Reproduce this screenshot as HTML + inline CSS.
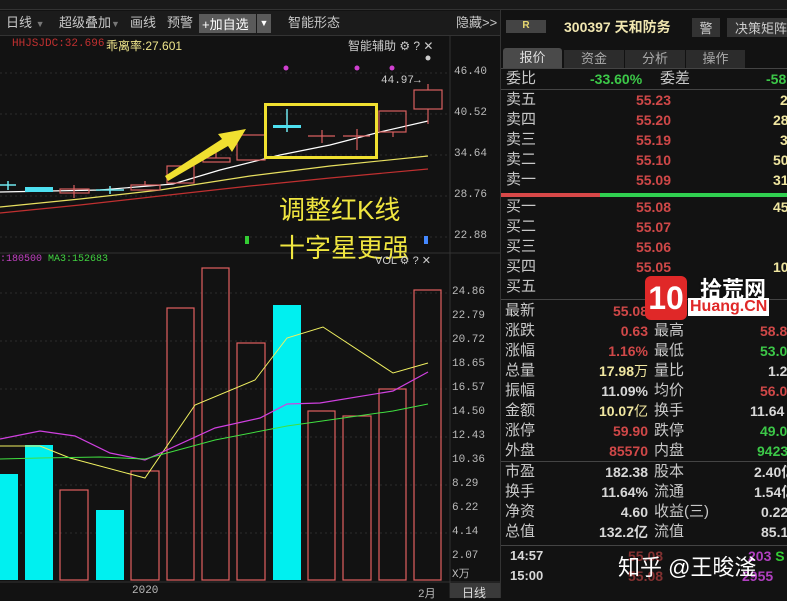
<!DOCTYPE html>
<html><head><meta charset="utf-8"><style>
*{margin:0;padding:0;box-sizing:border-box}
body{width:787px;height:598px;background:#121212;font-family:"Liberation Sans","Noto Sans CJK SC",sans-serif;position:relative;overflow:hidden;color:#ccc}
.a{position:absolute;white-space:nowrap}
.lb{font-size:15px;color:#c8c8c8;line-height:18px}
.r{color:#d04848;font-weight:bold;line-height:18px}
.g{color:#3cc848;font-weight:bold;line-height:18px}
.y{color:#f0e6a0;font-weight:bold;line-height:18px}
.w{color:#d8d8d8;line-height:18px}
.m{font-family:"Liberation Mono",monospace;font-size:11px;color:#bbb}
</style></head><body>
<div class="a" style="left:0;top:0;width:787px;height:10px;background:#1a1a1a;border-bottom:1px solid #333"></div>
<div class="a" style="left:0;top:11px;width:500px;height:25px;background:#1b1b1b;border-bottom:1px solid #333"></div>
<div class="a lb" style="left:6px;top:14px;font-size:13px">日线 <span style="color:#777;font-size:9px">▼</span></div>
<div class="a lb" style="left:59px;top:14px;font-size:13px">超级叠加<span style="color:#777;font-size:9px">▼</span></div>
<div class="a lb" style="left:130px;top:14px;font-size:13px">画线</div>
<div class="a lb" style="left:167px;top:14px;font-size:13px">预警</div>
<div class="a" style="left:199px;top:14px;width:57px;height:19px;background:#5a5a5a;color:#fff;font-size:13px;padding-left:3px">+加自选</div>
<div class="a" style="left:257px;top:14px;width:14px;height:19px;background:#5a5a5a;color:#fff;font-size:9px;text-align:center;line-height:19px">▼</div>
<div class="a lb" style="left:288px;top:14px;font-size:13px">智能形态</div>
<div class="a lb" style="left:456px;top:14px;font-size:13px">隐藏&gt;&gt;</div>
<svg class="a" style="left:0;top:36px" width="500" height="562" viewBox="0 36 500 562">
<line x1="450" y1="36" x2="450" y2="598" stroke="#333"/>
<line x1="0" y1="253" x2="500" y2="253" stroke="#333"/>
<line x1="0" y1="582" x2="500" y2="582" stroke="#333"/>
<g stroke="#2c2c2c" stroke-dasharray="2,3">
<line x1="0" y1="73" x2="450" y2="73"/><line x1="0" y1="114" x2="450" y2="114"/><line x1="0" y1="155" x2="450" y2="155"/><line x1="0" y1="196" x2="450" y2="196"/><line x1="0" y1="237" x2="450" y2="237"/>
</g>
<polyline fill="none" stroke="#c03030" stroke-width="1.2" points="0,213 80,205 160,196 250,186 330,178 428,169"/>
<polyline fill="none" stroke="#e8e060" stroke-width="1.2" points="0,207 80,199 160,190 250,176 330,166 428,156"/>
<polyline fill="none" stroke="#fff" stroke-width="1.2" points="0,192 100,190 173,184 220,170 280,155 330,145 380,132 428,121"/>
<g stroke="#70e8f0" stroke-width="1.5">
<line x1="0" y1="185" x2="16" y2="185"/><line x1="8" y1="181" x2="8" y2="190"/>
<line x1="110" y1="186" x2="110" y2="194"/><line x1="96" y1="190" x2="124" y2="190"/>
<line x1="287" y1="109" x2="287" y2="132"/></g>
<rect x="25" y="187" width="28" height="5" fill="#4ee0f0"/>
<rect x="273" y="125" width="28" height="3" fill="#4ee0f0"/>
<g stroke="#d86060" stroke-width="1.2" fill="none">
<rect x="60" y="189" width="29" height="4"/><line x1="74" y1="185" x2="74" y2="198"/>
<rect x="131" y="185" width="29" height="5"/><line x1="145" y1="181" x2="145" y2="185"/>
<rect x="167" y="166" width="27" height="17"/>
<rect x="203" y="158" width="27" height="4"/><line x1="216" y1="150" x2="216" y2="158"/>
<rect x="237" y="135" width="28" height="25"/>
<line x1="308" y1="136" x2="335" y2="136"/><line x1="322" y1="130" x2="322" y2="143"/>
<line x1="343" y1="136" x2="370" y2="136"/><line x1="357" y1="129" x2="357" y2="150"/>
<rect x="379" y="111" width="27" height="21"/><line x1="393" y1="132" x2="393" y2="137"/>
<rect x="414" y="90" width="28" height="19"/><line x1="428" y1="84" x2="428" y2="90"/><line x1="428" y1="109" x2="428" y2="124"/>
</g>
<rect x="265.5" y="104.5" width="111" height="53" fill="none" stroke="#f0e030" stroke-width="3"/>
<polygon points="165,176 222,139 218,134 246,129 232,152 228,146 168,181" fill="#f0e030"/>
<g fill="#d040d0"><circle cx="286" cy="68" r="2.5"/><circle cx="357" cy="68" r="2.5"/><circle cx="392" cy="68" r="2.5"/></g>
<circle cx="428" cy="58" r="2.5" fill="#ccc"/>
<polygon points="245,236 249,236 249,244 245,244" fill="#3c3"/><polygon points="424,236 428,236 428,244 424,244" fill="#48f"/>
<g stroke="#2c2c2c" stroke-dasharray="2,3">
<line x1="0" y1="293" x2="450" y2="293"/><line x1="0" y1="341" x2="450" y2="341"/><line x1="0" y1="389" x2="450" y2="389"/><line x1="0" y1="437" x2="450" y2="437"/><line x1="0" y1="485" x2="450" y2="485"/><line x1="0" y1="533" x2="450" y2="533"/>
</g>
<g fill="#00f0f0"><rect x="0" y="474" width="18" height="106"/><rect x="25" y="445" width="28" height="135"/><rect x="96" y="510" width="28" height="70"/><rect x="273" y="305" width="28" height="275"/></g>
<g fill="none" stroke="#e06060" stroke-width="1.2">
<rect x="60" y="490" width="28" height="90"/><rect x="131" y="471" width="28" height="109"/><rect x="167" y="308" width="27" height="272"/><rect x="202" y="268" width="27" height="312"/><rect x="237" y="343" width="28" height="237"/><rect x="308" y="411" width="27" height="169"/><rect x="343" y="416" width="28" height="164"/><rect x="379" y="389" width="27" height="191"/><rect x="414" y="290" width="27" height="290"/></g>
<polyline fill="none" stroke="#f0f060" points="0,446 40,446 70,458 145,478 195,405 255,380 287,338 323,327 393,373 428,363"/>
<polyline fill="none" stroke="#d040e0" stroke-width="1.2" points="0,439 40,431 75,436 110,453 145,460 215,428 260,418 287,404 320,403 393,391 428,372"/>
<polyline fill="none" stroke="#40e040" points="0,459 40,458 100,457 145,459 215,440 287,426 393,411 428,404"/>
<rect x="450" y="583" width="50" height="15" fill="#3a3a3a"/>
</svg>
<div class="a" style="left:12px;top:38px;font-family:'Liberation Mono',monospace;font-size:11px;color:#c03030">HHJSJDC:32.696</div>
<div class="a" style="left:106px;top:37px;font-size:12px;color:#f0e68c">乖离率:27.601</div>
<div class="a" style="left:348px;top:37px;font-size:12px;color:#ccc">智能辅助 ⚙ ? ✕</div>
<div class="a" style="left:381px;top:75px;font-family:'Liberation Mono',monospace;font-size:11px;color:#ccc">44.97→</div>
<div class="a" style="left:279px;top:190px;font-size:26px;color:#f0e640">调整红K线</div>
<div class="a" style="left:279px;top:228px;font-size:26px;color:#f0e640">十字星更强</div>
<div class="a" style="left:0;top:254px;font-family:'Liberation Mono',monospace;font-size:10px;color:#c040c0">:180500 <span style="color:#40d040">MA3:152683</span></div>
<div class="a" style="left:375px;top:254px;font-size:11px;color:#ccc">VOL ⚙ ? ✕</div>
<div class="a m" style="left:454px;top:66px">46.40</div><div class="a m" style="left:454px;top:107px">40.52</div><div class="a m" style="left:454px;top:148px">34.64</div><div class="a m" style="left:454px;top:189px">28.76</div><div class="a m" style="left:454px;top:230px">22.88</div>
<div class="a m" style="left:452px;top:286px">24.86</div><div class="a m" style="left:452px;top:310px">22.79</div><div class="a m" style="left:452px;top:334px">20.72</div><div class="a m" style="left:452px;top:358px">18.65</div><div class="a m" style="left:452px;top:382px">16.57</div><div class="a m" style="left:452px;top:406px">14.50</div><div class="a m" style="left:452px;top:430px">12.43</div><div class="a m" style="left:452px;top:454px">10.36</div><div class="a m" style="left:452px;top:478px">8.29</div><div class="a m" style="left:452px;top:502px">6.22</div><div class="a m" style="left:452px;top:526px">4.14</div><div class="a m" style="left:452px;top:550px">2.07</div><div class="a m" style="left:452px;top:565px">X万</div>
<div class="a m" style="left:132px;top:585px">2020</div><div class="a m" style="left:418px;top:585px">2月</div>
<div class="a" style="left:462px;top:584px;font-size:12px;color:#ddd">日线</div>
<div class="a" style="left:500px;top:10px;width:1px;height:588px;background:#333"></div>
<div class="a" style="left:506px;top:20px;width:40px;height:13px;background:#444;color:#e8d870;font-size:10px;text-align:center;font-weight:bold">R</div>
<div class="a" style="left:564px;top:17px;font-size:14px;color:#f0e6b0;font-weight:bold">300397 天和防务</div>
<div class="a" style="left:692px;top:18px;width:28px;height:19px;background:#333;color:#ccc;font-size:13px;text-align:center">警</div>
<div class="a" style="left:727px;top:18px;width:62px;height:19px;background:#333;color:#ccc;font-size:13px;padding-left:8px">决策矩阵</div>
<div class="a" style="left:501px;top:68px;width:286px;height:1px;background:#444"></div>
<div class="a" style="left:503px;top:48px;width:59px;height:20px;background:#4a4a4a;color:#ddd;font-size:13px;text-align:center;line-height:20px;border-radius:3px 3px 0 0">报价</div>
<div class="a" style="left:564px;top:50px;width:60px;height:18px;background:#2c2c2c;color:#aaa;font-size:13px;text-align:center;line-height:18px">资金</div>
<div class="a" style="left:625px;top:50px;width:60px;height:18px;background:#2c2c2c;color:#aaa;font-size:13px;text-align:center;line-height:18px">分析</div>
<div class="a" style="left:686px;top:50px;width:59px;height:18px;background:#2c2c2c;color:#aaa;font-size:13px;text-align:center;line-height:18px">操作</div>
<div class="a lb" style="left:506px;top:70px">委比</div><div class="a g" style="left:590px;top:70px;width:50px;text-align:right;font-size:14px">-33.60%</div><div class="a lb" style="left:660px;top:70px">委差</div><div class="a g" style="left:766px;top:70px;font-size:14px">-58</div>
<div class="a" style="left:501px;top:89px;width:286px;height:1px;background:#444"></div>
<div class="a lb" style="left:506px;top:91px">卖五</div><div class="a r" style="left:600px;top:91px;width:71px;text-align:right;font-size:14px">55.23</div><div class="a y" style="left:780px;top:91px;font-size:14px">2</div>
<div class="a lb" style="left:506px;top:111px">卖四</div><div class="a r" style="left:600px;top:111px;width:71px;text-align:right;font-size:14px">55.20</div><div class="a y" style="left:773px;top:111px;font-size:14px">28</div>
<div class="a lb" style="left:506px;top:131px">卖三</div><div class="a r" style="left:600px;top:131px;width:71px;text-align:right;font-size:14px">55.19</div><div class="a y" style="left:780px;top:131px;font-size:14px">3</div>
<div class="a lb" style="left:506px;top:151px">卖二</div><div class="a r" style="left:600px;top:151px;width:71px;text-align:right;font-size:14px">55.10</div><div class="a y" style="left:773px;top:151px;font-size:14px">50</div>
<div class="a lb" style="left:506px;top:171px">卖一</div><div class="a r" style="left:600px;top:171px;width:71px;text-align:right;font-size:14px">55.09</div><div class="a y" style="left:773px;top:171px;font-size:14px">31</div>
<div class="a" style="left:501px;top:193px;width:99px;height:4px;background:#d84848"></div><div class="a" style="left:600px;top:193px;width:187px;height:4px;background:#30d050"></div>
<div class="a lb" style="left:506px;top:198px">买一</div><div class="a r" style="left:600px;top:198px;width:71px;text-align:right;font-size:14px">55.08</div><div class="a y" style="left:773px;top:198px;font-size:14px">45</div>
<div class="a lb" style="left:506px;top:218px">买二</div><div class="a r" style="left:600px;top:218px;width:71px;text-align:right;font-size:14px">55.07</div>
<div class="a lb" style="left:506px;top:238px">买三</div><div class="a r" style="left:600px;top:238px;width:71px;text-align:right;font-size:14px">55.06</div>
<div class="a lb" style="left:506px;top:258px">买四</div><div class="a r" style="left:600px;top:258px;width:71px;text-align:right;font-size:14px">55.05</div><div class="a y" style="left:773px;top:258px;font-size:14px">10</div>
<div class="a lb" style="left:506px;top:278px">买五</div><div class="a r" style="left:600px;top:278px;width:71px;text-align:right;font-size:14px">55</div>
<div class="a" style="left:501px;top:299px;width:286px;height:1px;background:#444"></div>
<div style="font-size:14px">
<div class="a lb" style="left:505px;top:302px">最新</div><div class="a r" style="left:580px;top:302px;width:68px;text-align:right">55.08</div>
<div class="a lb" style="left:505px;top:322px">涨跌</div><div class="a r" style="left:580px;top:322px;width:68px;text-align:right">0.63</div><div class="a lb" style="left:654px;top:322px">最高</div><div class="a r" style="left:760px;top:322px">58.8</div>
<div class="a lb" style="left:505px;top:342px">涨幅</div><div class="a r" style="left:580px;top:342px;width:68px;text-align:right">1.16%</div><div class="a lb" style="left:654px;top:342px">最低</div><div class="a g" style="left:760px;top:342px">53.0</div>
<div class="a lb" style="left:505px;top:362px">总量</div><div class="a y" style="left:570px;top:362px;width:78px;text-align:right">17.98<span style="font-weight:normal">万</span></div><div class="a lb" style="left:654px;top:362px">量比</div><div class="a w" style="left:768px;top:362px;font-weight:bold">1.2</div>
<div class="a lb" style="left:505px;top:382px">振幅</div><div class="a w" style="left:570px;top:382px;width:78px;text-align:right;font-weight:bold">11.09%</div><div class="a lb" style="left:654px;top:382px">均价</div><div class="a r" style="left:760px;top:382px">56.0</div>
<div class="a lb" style="left:505px;top:402px">金额</div><div class="a y" style="left:570px;top:402px;width:78px;text-align:right">10.07<span style="font-weight:normal">亿</span></div><div class="a lb" style="left:654px;top:402px">换手</div><div class="a w" style="left:750px;top:402px;font-weight:bold">11.64</div>
<div class="a lb" style="left:505px;top:422px">涨停</div><div class="a r" style="left:580px;top:422px;width:68px;text-align:right">59.90</div><div class="a lb" style="left:654px;top:422px">跌停</div><div class="a g" style="left:760px;top:422px">49.0</div>
<div class="a lb" style="left:505px;top:442px">外盘</div><div class="a r" style="left:580px;top:442px;width:68px;text-align:right">85570</div><div class="a lb" style="left:654px;top:442px">内盘</div><div class="a g" style="left:757px;top:442px">9423</div>
<div class="a" style="left:501px;top:461px;width:286px;height:1px;background:#444"></div>
<div class="a lb" style="left:505px;top:463px">市盈</div><div class="a w" style="left:570px;top:463px;width:78px;text-align:right;font-weight:bold">182.38</div><div class="a lb" style="left:654px;top:463px">股本</div><div class="a w" style="left:754px;top:463px;font-weight:bold">2.40亿</div>
<div class="a lb" style="left:505px;top:483px">换手</div><div class="a w" style="left:570px;top:483px;width:78px;text-align:right;font-weight:bold">11.64%</div><div class="a lb" style="left:654px;top:483px">流通</div><div class="a w" style="left:754px;top:483px;font-weight:bold">1.54亿</div>
<div class="a lb" style="left:505px;top:503px">净资</div><div class="a w" style="left:570px;top:503px;width:78px;text-align:right;font-weight:bold">4.60</div><div class="a lb" style="left:654px;top:503px">收益(三)</div><div class="a w" style="left:761px;top:503px;font-weight:bold">0.22</div>
<div class="a lb" style="left:505px;top:523px">总值</div><div class="a w" style="left:570px;top:523px;width:78px;text-align:right;font-weight:bold">132.2亿</div><div class="a lb" style="left:654px;top:523px">流值</div><div class="a w" style="left:761px;top:523px;font-weight:bold">85.1亿</div>
<div class="a" style="left:501px;top:545px;width:286px;height:1px;background:#444"></div>
<div class="a w" style="left:510px;top:547px;font-weight:bold;font-size:13px">14:57</div><div class="a r" style="left:628px;top:547px;opacity:.6">55.08</div><div class="a" style="left:748px;top:547px;color:#b040c0;font-weight:bold;line-height:18px">203 <span style="color:#3c3">S</span></div>
<div class="a w" style="left:510px;top:567px;font-weight:bold;font-size:13px">15:00</div><div class="a r" style="left:628px;top:567px;opacity:.6">55.08</div><div class="a" style="left:742px;top:567px;color:#b040c0;font-weight:bold;line-height:18px">2955</div>
</div>
<div class="a" style="left:645px;top:276px;width:42px;height:44px;background:#e02828;border-radius:6px;color:#fff;font-size:32px;font-weight:bold;text-align:center;line-height:44px">10</div>
<div class="a" style="left:700px;top:272px;font-size:22px;color:#fff;font-weight:bold;text-shadow:0 0 2px #000">拾荒网</div>
<div class="a" style="left:688px;top:298px;font-size:16px;color:#e02828;background:#fff;padding:0 2px;font-weight:bold">Huang.CN</div>
<div class="a" style="left:618px;top:550px;font-size:22px;color:#fff">知乎 @王晙滏</div>
</body></html>
